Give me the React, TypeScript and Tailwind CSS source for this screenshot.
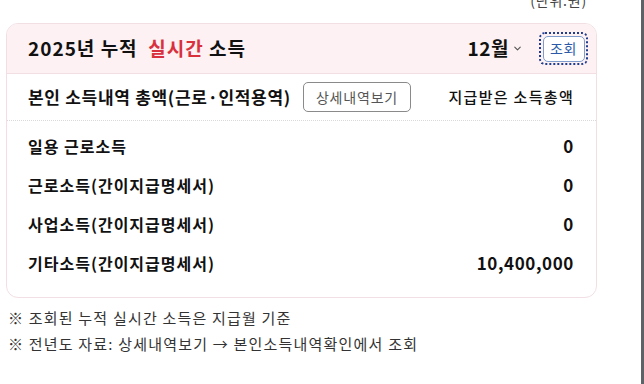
import { ChevronDown } from "lucide-react";

const ROWS = [
  { label: "일용 근로소득", value: "0" },
  { label: "근로소득(간이지급명세서)", value: "0" },
  { label: "사업소득(간이지급명세서)", value: "0" },
  { label: "기타소득(간이지급명세서)", value: "10,400,000" },
];

export default function App() {
  return (
    <div
      className="flex h-[384px] w-[644px] overflow-hidden bg-white text-[#111]"
      style={{ fontFamily: '"Noto Sans CJK KR", "Noto Sans", sans-serif' }}
    >
      <div className="flex w-[641px] flex-col">
        <div className="-mt-[9px] flex justify-end pr-[54px] text-[14px] leading-[18px] tracking-[0.8px] text-[#444]">
          (단위:원)
        </div>

        <div className="ml-[6px] mt-[14px] w-[591px] overflow-hidden rounded-[12px] border border-[#f1dfe3]">
          {/* header */}
          <div className="flex h-[50px] items-center border-b border-[#f1dfe3] bg-[#fdf1f3] pl-[21px] pr-[8px]">
            <h2 className="text-[19px] font-bold tracking-[1px]">
              2025년 누적&nbsp; <span className="text-[#d8303c]">실시간</span> 소득
            </h2>
            <div className="ml-auto flex items-center">
              <span className="text-[19px] font-bold tracking-[0.5px]">12월</span>
              <ChevronDown className="ml-[3px] h-[11px] w-[11px] text-[#555]" strokeWidth={2.5} />
              <div className="ml-[16px] rounded-[6px] border-[2px] border-dotted border-[#1f3c8f] p-[1.5px]">
                <button className="flex h-[26px] w-[42px] items-center justify-center rounded-[5px] border border-[#7f9ccd] bg-white text-[14px] tracking-[0.5px] text-[#2c5aa8]">
                  조회
                </button>
              </div>
            </div>
          </div>

          {/* summary */}
          <div className="flex h-[47px] items-center border-b border-dotted border-[#d9d9d9] pl-[21px] pr-[22px]">
            <span className="text-[17px] font-semibold tracking-[0.7px]">
              본인 소득내역 총액(근로·인적용역)
            </span>
            <button className="ml-[12px] flex h-[30px] items-center rounded-[5px] border border-[#8a8a8a] px-[12px] text-[14px] tracking-[0.8px] text-[#555]">
              상세내역보기
            </button>
            <span className="ml-auto text-[15px] font-medium tracking-[1.3px]">지급받은 소득총액</span>
          </div>

          {/* rows */}
          <div className="flex flex-col pb-[15px] pt-[5px]">
            {ROWS.map((r) => (
              <div
                key={r.label}
                className="flex h-[39px] items-center justify-between pl-[21px] pr-[22px]"
              >
                <span className="text-[16px] font-semibold tracking-[1px]">{r.label}</span>
                <span className="text-[17px] font-bold tracking-[0.6px]">{r.value}</span>
              </div>
            ))}
          </div>
        </div>

        <div className="ml-[8px] mt-[10px] flex flex-col gap-[6px] text-[15px] leading-[20px] tracking-[1.2px] text-[#333]">
          <p>※ 조회된 누적 실시간 소득은 지급월 기준</p>
          <p>※ 전년도 자료: 상세내역보기 → 본인소득내역확인에서 조회</p>
        </div>
      </div>
      <div className="w-[3px] bg-[#5f6368]" />
    </div>
  );
}
